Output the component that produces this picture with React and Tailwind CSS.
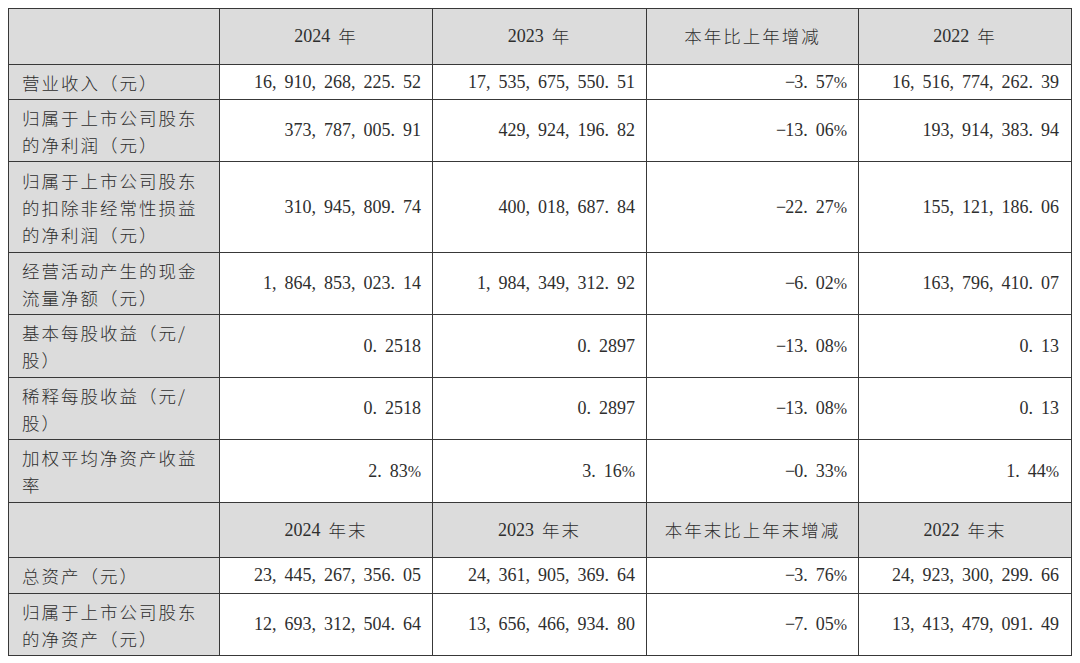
import React from "react";

const rows1 = [
  { h: "h-[35px]", label: ["营业收入（元）"], v: ["16,910,268,225.52", "17,535,675,550.51", "−3.57%", "16,516,774,262.39"] },
  { h: "h-[62px]", label: ["归属于上市公司股东", "的净利润（元）"], v: ["373,787,005.91", "429,924,196.82", "−13.06%", "193,914,383.94"] },
  { h: "h-[91px]", label: ["归属于上市公司股东", "的扣除非经常性损益", "的净利润（元）"], v: ["310,945,809.74", "400,018,687.84", "−22.27%", "155,121,186.06"] },
  { h: "h-[62px]", label: ["经营活动产生的现金", "流量净额（元）"], v: ["1,864,853,023.14", "1,984,349,312.92", "−6.02%", "163,796,410.07"] },
  { h: "h-[63px]", label: ["基本每股收益（元/", "股）"], v: ["0.2518", "0.2897", "−13.08%", "0.13"] },
  { h: "h-[62px]", label: ["稀释每股收益（元/", "股）"], v: ["0.2518", "0.2897", "−13.08%", "0.13"] },
  { h: "h-[63px]", label: ["加权平均净资产收益", "率"], v: ["2.83%", "3.16%", "−0.33%", "1.44%"] },
];

const rows2 = [
  { h: "h-[36px]", label: ["总资产（元）"], v: ["23,445,267,356.05", "24,361,905,369.64", "−3.76%", "24,923,300,299.66"] },
  { h: "h-[62px]", label: ["归属于上市公司股东", "的净资产（元）"], v: ["12,693,312,504.64", "13,656,466,934.80", "−7.05%", "13,413,479,091.49"] },
];

const grid = "grid grid-cols-[211px_213px_214px_212px_213px]";
const cell = "border-r border-b border-[#383838] flex items-center";

function Num({ text }) {
  return (
    <span className="font-['Liberation_Serif',serif] text-[18px] whitespace-nowrap">
      {text.split("").map((c, i) => {
        if (c === "," || c === ".") return <span key={i} className="mr-[8px]">{c}</span>;
        if (c === "−") return <span key={i} className="-mr-[1px]">{c}</span>;
        if (c === "%") return <span key={i} className="text-[16px]">{c}</span>;
        return <span key={i}>{c}</span>;
      })}
    </span>
  );
}

function Cjk({ children }) {
  return (
    <span className="font-['Noto_Sans_CJK_SC',sans-serif] font-light text-[17.5px] tracking-[2px]">{children}</span>
  );
}

function Head({ year, suffix }) {
  return (
    <span className="whitespace-nowrap flex items-center">
      <span className="font-['Liberation_Serif',serif] text-[18px]">{year}</span>
      <span className="ml-[8px]">
        <Cjk>{suffix}</Cjk>
      </span>
    </span>
  );
}

function HeaderRow({ h, cols }) {
  return (
    <div className={`${grid} ${h} bg-[#dcdcdc]`}>
      <div className={cell}></div>
      {cols.map((c, i) => (
        <div key={i} className={`${cell} justify-center`}>{c}</div>
      ))}
    </div>
  );
}

function DataRow({ row }) {
  return (
    <div className={`${grid} ${row.h}`}>
      <div className={`${cell} bg-[#dcdcdc] pl-[13px]`}>
        <div className="flex flex-col leading-[27px] font-['Noto_Sans_CJK_SC',sans-serif] font-light text-[17.5px] tracking-[2px]">
          {row.label.map((l, i) => (
            <span key={i} className="whitespace-nowrap">{l}</span>
          ))}
        </div>
      </div>
      {row.v.map((v, i) => (
        <div key={i} className={`${cell} justify-end bg-white ${i === 3 ? "pr-[12px]" : "pr-[11px]"}`}>
          <Num text={v} />
        </div>
      ))}
    </div>
  );
}

export default function App() {
  return (
    <div className="w-[1080px] h-[663px] bg-white pl-[8px] pt-[8px] text-[#2e2e2e]">
      <div className="w-[1064px] border-t border-l border-[#383838]">
        <HeaderRow
          h="h-[56px]"
          cols={[
            <Head year="2024" suffix="年" />,
            <Head year="2023" suffix="年" />,
            <Cjk>本年比上年增减</Cjk>,
            <Head year="2022" suffix="年" />,
          ]}
        />
        {rows1.map((r, i) => (
          <DataRow key={i} row={r} />
        ))}
        <HeaderRow
          h="h-[55px]"
          cols={[
            <Head year="2024" suffix="年末" />,
            <Head year="2023" suffix="年末" />,
            <Cjk>本年末比上年末增减</Cjk>,
            <Head year="2022" suffix="年末" />,
          ]}
        />
        {rows2.map((r, i) => (
          <DataRow key={i} row={r} />
        ))}
      </div>
    </div>
  );
}
